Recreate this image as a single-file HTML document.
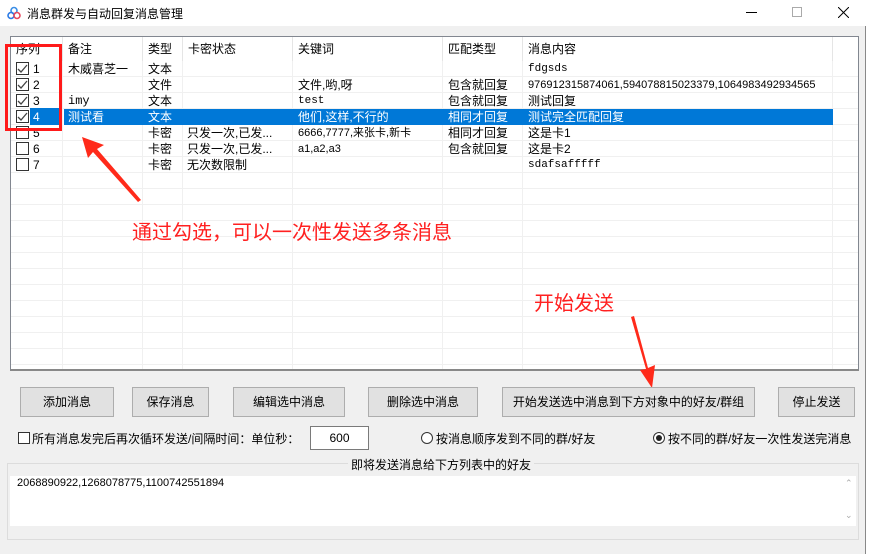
<!DOCTYPE html>
<html><head><meta charset="utf-8"><style>
*{margin:0;padding:0;box-sizing:border-box}
body{width:869px;height:554px;overflow:hidden;background:#fff;font-family:"Liberation Sans","Noto Sans CJK SC",sans-serif;font-size:12px;color:#000;position:relative}
.a{position:absolute;white-space:nowrap}
.win{position:absolute;left:0;top:0;width:866px;height:554px;background:#f0f0f0;border-right:1px solid #888}
.title{position:absolute;left:0;top:0;width:866px;height:26px;background:#fff}
.list{position:absolute;left:10px;top:36px;width:849px;height:335px;background:#fff;border:1px solid #828790;border-bottom:2px solid #888;overflow:hidden}
.grid{position:absolute;left:0;top:24px;width:100%;height:320px;background:repeating-linear-gradient(to bottom,transparent 0,transparent 15px,#f0f0f0 15px,#f0f0f0 16px)}
.vl{position:absolute;top:0;width:1px;height:100%;background:#f0f0f0}
.hd{position:absolute;top:0;height:24px;line-height:24px;padding-left:5px;border-right:1px solid #e5e5e5}
.sel{position:absolute;left:52px;top:72px;width:770px;height:16px;background:#0078d7}
.row{position:absolute;height:16px;line-height:16px}
.cb{position:absolute;width:13px;height:13px;border:1px solid #333;background:#fff}
.btn{position:absolute;top:387px;height:30px;background:#e1e1e1;border:1px solid #adadad;text-align:center;line-height:28px}
.red{color:#ff2020}
</style></head><body>
<div class="win"></div>
<div class="title">
<svg class="a" style="left:7px;top:6px" width="14" height="14" viewBox="0 0 14 14"><circle cx="7" cy="4.5" r="3" fill="none" stroke="#3a8ee6" stroke-width="1.6"/><circle cx="4" cy="9.5" r="3" fill="none" stroke="#2c7be5" stroke-width="1.6"/><circle cx="10" cy="9.5" r="3" fill="none" stroke="#e84a5f" stroke-width="1.6"/></svg>
<div class="a" style="left:27px;top:5px;font-size:12px">消息群发与自动回复消息管理</div>
<div class="a" style="left:746px;top:12px;width:11px;height:1px;background:#000"></div>
<div class="a" style="left:792px;top:7px;width:10px;height:10px;border:1px solid #aaa"></div>
<svg class="a" style="left:838px;top:7px" width="11" height="11"><path d="M0 0L11 11M11 0L0 11" stroke="#000" stroke-width="1"/></svg>
</div>
<div class="list">
<div class="grid"></div>
<div class="vl" style="left:51px"></div><div class="vl" style="left:131px"></div><div class="vl" style="left:171px"></div><div class="vl" style="left:281px"></div><div class="vl" style="left:431px"></div><div class="vl" style="left:511px"></div><div class="vl" style="left:821px"></div>
<div style="position:absolute;left:0;top:0;width:100%;height:24px;background:#fff"></div>
<div class="hd" style="left:0;width:52px">序列</div><div class="hd" style="left:52px;width:80px">备注</div><div class="hd" style="left:132px;width:40px">类型</div><div class="hd" style="left:172px;width:110px">卡密状态</div><div class="hd" style="left:282px;width:150px">关键词</div><div class="hd" style="left:432px;width:80px">匹配类型</div><div class="hd" style="left:512px;width:310px">消息内容</div>
<div class="sel"></div>
<div class="a" style="left:52px;top:72px;width:1px;height:16px;background:#fff"></div>
</div>
<div class="a" style="left:0;top:0;width:869px;height:554px">
<div class="cb" style="left:16px;top:62px"></div><div class="cb" style="left:16px;top:78px"></div><div class="cb" style="left:16px;top:94px"></div><div class="cb" style="left:16px;top:110px"></div><div class="cb" style="left:16px;top:126px"></div><div class="cb" style="left:16px;top:142px"></div><div class="cb" style="left:16px;top:158px"></div>
<svg class="a" style="left:16px;top:62px" width="14" height="62"><path d="M2 7L5 10L11 3M2 23L5 26L11 19M2 39L5 42L11 35M2 55L5 58L11 51" fill="none" stroke="#444" stroke-width="1.3"/></svg>
<div class="a" style="left:30px;top:108px;width:32px;height:17px;background:#0078d7"></div>
<div class="row a" style="left:33px;top:61px">1</div><div class="row a" style="left:33px;top:77px">2</div><div class="row a" style="left:33px;top:93px">3</div><div class="row a" style="left:33px;top:109px;color:#fff">4</div><div class="row a" style="left:33px;top:125px">5</div><div class="row a" style="left:33px;top:141px">6</div><div class="row a" style="left:33px;top:157px">7</div>
<div class="row a" style="left:68px;top:61px">木威喜芝一</div><div class="row a" style="left:68px;top:93px;font-family:'Liberation Mono',monospace">imy</div><div class="row a" style="left:68px;top:109px;color:#fff">测试看</div>
<div class="row a" style="left:148px;top:61px">文本</div><div class="row a" style="left:148px;top:77px">文件</div><div class="row a" style="left:148px;top:93px">文本</div><div class="row a" style="left:148px;top:109px;color:#fff">文本</div><div class="row a" style="left:148px;top:125px">卡密</div><div class="row a" style="left:148px;top:141px">卡密</div><div class="row a" style="left:148px;top:157px">卡密</div>
<div class="row a" style="left:187px;top:125px">只发一次,已发...</div><div class="row a" style="left:187px;top:141px">只发一次,已发...</div><div class="row a" style="left:187px;top:157px">无次数限制</div>
<div class="row a" style="left:298px;top:77px">文件,哟,呀</div><div class="row a" style="left:298px;top:93px;font-family:'Liberation Mono',monospace;font-size:11px">test</div><div class="row a" style="left:298px;top:109px;color:#fff">他们,这样,不行的</div><div class="row a" style="left:298px;top:125px;font-size:11px">6666,7777,来张卡,新卡</div><div class="row a" style="left:298px;top:141px;font-size:11px">a1,a2,a3</div>
<div class="row a" style="left:448px;top:77px">包含就回复</div><div class="row a" style="left:448px;top:93px">包含就回复</div><div class="row a" style="left:448px;top:109px;color:#fff">相同才回复</div><div class="row a" style="left:448px;top:125px">相同才回复</div><div class="row a" style="left:448px;top:141px">包含就回复</div>
<div class="row a" style="left:528px;top:61px;font-family:'Liberation Mono',monospace;font-size:11px">fdgsds</div><div class="row a" style="left:528px;top:77px;font-size:11px">976912315874061,594078815023379,1064983492934565</div><div class="row a" style="left:528px;top:93px">测试回复</div><div class="row a" style="left:528px;top:109px;color:#fff">测试完全匹配回复</div><div class="row a" style="left:528px;top:125px">这是卡1</div><div class="row a" style="left:528px;top:141px">这是卡2</div><div class="row a" style="left:528px;top:157px;font-family:'Liberation Mono',monospace;font-size:11px">sdafsafffff</div>
</div>
<div class="a" style="left:5px;top:44px;width:57px;height:87px;border:3px solid #ff1a1a"></div>
<svg class="a" style="left:0;top:0" width="869" height="554"><polygon points="82,137 104,145 97,149 141,200 138,202 93,152 88,158" fill="#ff2a1a"/><polygon points="631,317 634,316 648,368 655,365 652,388 640,370 646,369" fill="#ff2a1a"/></svg>
<div class="a red" style="left:132px;top:216px;font-size:20px">通过勾选，可以一次性发送多条消息</div>
<div class="a red" style="left:534px;top:287px;font-size:20px">开始发送</div>
<div class="btn" style="left:20px;width:94px">添加消息</div>
<div class="btn" style="left:132px;width:77px">保存消息</div>
<div class="btn" style="left:233px;width:112px">编辑选中消息</div>
<div class="btn" style="left:368px;width:110px">删除选中消息</div>
<div class="btn" style="left:502px;width:253px">开始发送选中消息到下方对象中的好友/群组</div>
<div class="btn" style="left:778px;width:77px">停止发送</div>
<div class="a" style="left:18px;top:432px;width:12px;height:12px;border:1px solid #333;background:#fff"></div>
<div class="a" style="left:32px;top:430px">所有消息发完后再次循环发送/间隔时间：单位秒：</div>
<div class="a" style="left:310px;top:426px;width:59px;height:24px;background:#fff;border:1px solid #7a7a7a;text-align:center;line-height:22px">600</div>
<div class="a" style="left:421px;top:432px;width:12px;height:12px;border:1px solid #333;border-radius:50%;background:#fff"></div>
<div class="a" style="left:436px;top:430px">按消息顺序发到不同的群/好友</div>
<div class="a" style="left:653px;top:432px;width:12px;height:12px;border:1px solid #333;border-radius:50%;background:#fff"><div style="position:absolute;left:2px;top:2px;width:6px;height:6px;border-radius:50%;background:#222"></div></div>
<div class="a" style="left:668px;top:430px">按不同的群/好友一次性发送完消息</div>
<div class="a" style="left:7px;top:463px;width:852px;height:77px;border:1px solid #dcdcdc"></div>
<div class="a" style="left:348px;top:456px;padding:0 3px;background:#f0f0f0">即将发送消息给下方列表中的好友</div>
<div class="a" style="left:10px;top:476px;width:846px;height:50px;background:#fff"></div>
<div class="a" style="left:17px;top:477px;font-size:11px">2068890922,1268078775,1100742551894</div>
<div class="a" style="left:845px;top:478px;font-size:9px;color:#aaa">&#8963;</div>
<div class="a" style="left:845px;top:510px;font-size:9px;color:#aaa">&#8964;</div>
</body></html>
